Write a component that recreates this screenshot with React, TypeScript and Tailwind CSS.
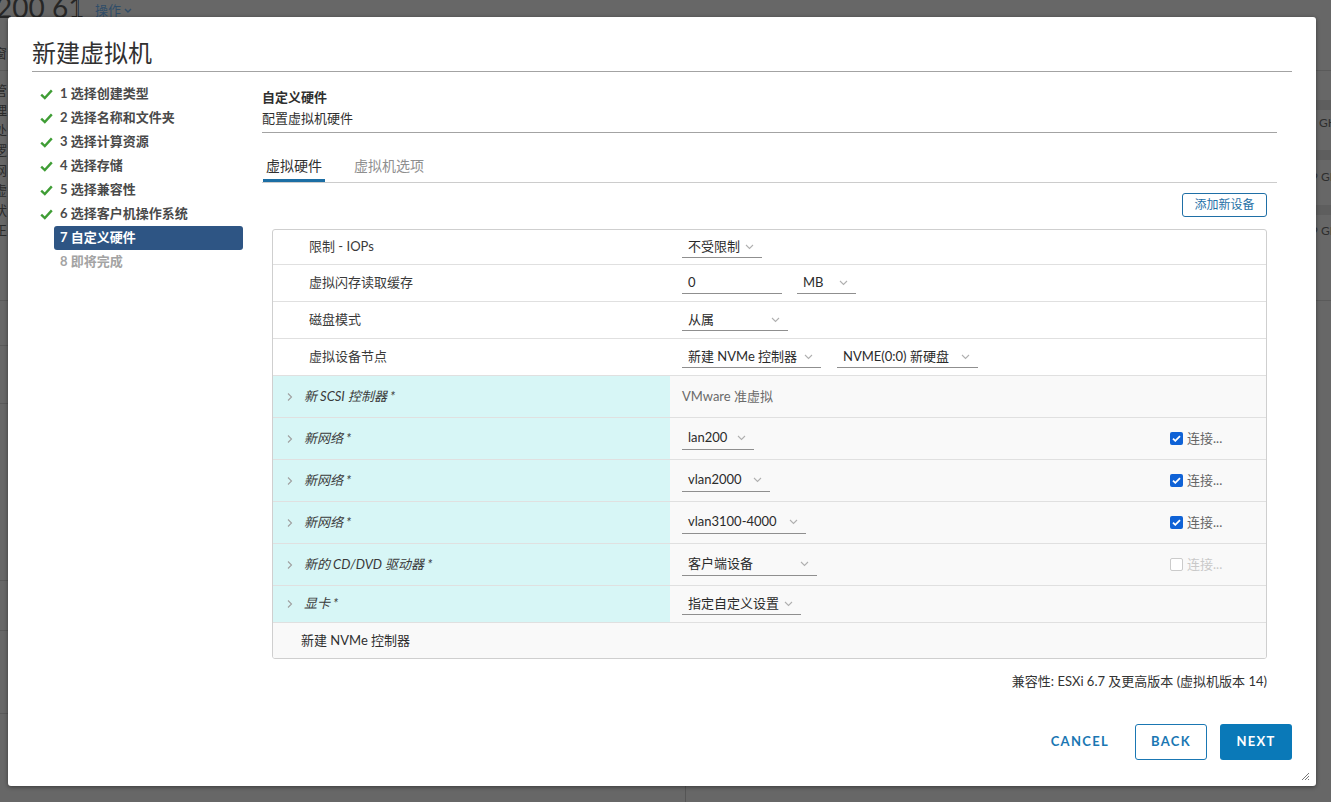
import React from 'react'

const STEPS = [
  { n: 1, label: '选择创建类型', state: 'done' },
  { n: 2, label: '选择名称和文件夹', state: 'done' },
  { n: 3, label: '选择计算资源', state: 'done' },
  { n: 4, label: '选择存储', state: 'done' },
  { n: 5, label: '选择兼容性', state: 'done' },
  { n: 6, label: '选择客户机操作系统', state: 'done' },
  { n: 7, label: '自定义硬件', state: 'active' },
  { n: 8, label: '即将完成', state: 'pending' },
]

const DEVICES = [
  { label: '新 SCSI 控制器 *', kind: 'text', value: 'VMware 准虚拟', h: 'h-[42px]' },
  { label: '新网络 *', kind: 'select', value: 'lan200', w: 'w-[72px]', check: 'on', h: 'h-[42px]' },
  { label: '新网络 *', kind: 'select', value: 'vlan2000', w: 'w-[88px]', check: 'on', h: 'h-[42px]' },
  { label: '新网络 *', kind: 'select', value: 'vlan3100-4000', w: 'w-[124px]', check: 'on', h: 'h-[42px]' },
  { label: '新的 CD/DVD 驱动器 *', kind: 'select', value: '客户端设备', w: 'w-[135px]', check: 'off', h: 'h-[42px]' },
  { label: '显卡 *', kind: 'select', value: '指定自定义设置', w: 'w-[119px]', h: 'h-[37px]' },
]

// faint page text that peeks out left of the dialog
const LEFT_CHARS = ['管', '理', '处', '逻', '网', '虚', '状', '正']

function GreenCheck() {
  return (
    <svg width="13" height="11" viewBox="0 0 13 11">
      <path d="M1.2 5.6l3.6 3.4L11.8 1.4" fill="none" stroke="#3f9d35" strokeWidth="2.4" />
    </svg>
  )
}

function Chevron() {
  return (
    <svg width="9" height="6" viewBox="0 0 9 6" className="shrink-0">
      <path d="M1 1l3.5 3.5L8 1" fill="none" stroke="#b0b0b0" strokeWidth="1.1" />
    </svg>
  )
}

function Caret() {
  return (
    <svg width="6" height="10" viewBox="0 0 6 10" className="shrink-0">
      <path d="M1 1.5l3.5 3.5L1 8.5" fill="none" stroke="#a0a0a0" strokeWidth="1.1" />
    </svg>
  )
}

function Select({ value, className }: { value: string; className: string }) {
  return (
    <div className={`flex h-[22px] items-center justify-between gap-[5px] border-b border-[#8f8f8f] pl-[6px] pr-[8px] text-[13px] text-[#2b2b2b] ${className}`}>
      <span className="whitespace-nowrap">{value}</span>
      <Chevron />
    </div>
  )
}

function Checkbox({ on }: { on: boolean }) {
  if (!on) return <span className="h-[13px] w-[13px] rounded-[2px] border border-[#cbcbcb] bg-white" />
  return (
    <span className="flex h-[13px] w-[13px] items-center justify-center rounded-[2px] bg-[#0f62d6]">
      <svg width="9" height="7" viewBox="0 0 9 7">
        <path d="M1 3.6l2.3 2.2L8 1.2" fill="none" stroke="#fff" strokeWidth="1.8" />
      </svg>
    </span>
  )
}

export default function App() {
  return (
    <div className="relative h-[802px] w-[1331px] overflow-hidden bg-[#676767] font-['Lato','Noto_Sans_CJK_SC',sans-serif]">
      {/* dimmed page behind the dialog */}
      <div className="absolute left-[-4px] top-[-11px] whitespace-nowrap text-[28px] leading-[36px] text-[#262626]">200 61</div>
      <div className="absolute left-[77px] top-0 h-[17px] w-px bg-[#555]" />
      <div className="absolute left-[95px] top-[1px] flex items-center gap-[3px] whitespace-nowrap text-[13px] leading-[18px] text-[#2f4d69]">
        操作
        <svg width="8" height="5" viewBox="0 0 8 5"><path d="M1 1l3 3 3-3" fill="none" stroke="#2f4d69" strokeWidth="1.4" /></svg>
      </div>
      <div className="absolute left-[-6px] top-[44px] text-[13px] leading-[18px] text-[#2a2a2a]">窗</div>
      <div className="absolute left-[-6px] top-[80px] flex flex-col text-[13px] leading-[20px] text-[#2a2a2a]">
        {LEFT_CHARS.map((c, i) => (
          <span key={i}>{c}</span>
        ))}
      </div>
      <div className="absolute left-0 top-[70px] h-px w-[8px] bg-[#5a5a5a]" />
      <div className="absolute left-0 top-[300px] h-px w-[8px] bg-[#5a5a5a]" />
      <div className="absolute left-0 top-[345px] h-px w-[8px] bg-[#5a5a5a]" />
      <div className="absolute left-0 top-[403px] h-px w-[8px] bg-[#5a5a5a]" />
      <div className="absolute left-0 top-[580px] h-px w-[8px] bg-[#5a5a5a]" />
      <div className="absolute left-0 top-[630px] h-px w-[8px] bg-[#5a5a5a]" />
      <div className="absolute left-0 top-[713px] h-px w-[8px] bg-[#5a5a5a]" />
      <div className="absolute left-[1316px] top-[70px] h-px w-[15px] bg-[#5a5a5a]" />
      <div className="absolute left-[1316px] top-[100px] h-[10px] w-[15px] bg-[#5e5e5e]" />
      <div className="absolute left-[1316px] top-[150px] h-[10px] w-[15px] bg-[#5e5e5e]" />
      <div className="absolute left-[1316px] top-[205px] h-[10px] w-[15px] bg-[#5e5e5e]" />
      <div className="absolute left-[1316px] top-[300px] h-px w-[15px] bg-[#5a5a5a]" />
      <div className="absolute left-[1309px] top-[114px] whitespace-nowrap text-[12px] text-[#2e2e2e]">2 GHz</div>
      <div className="absolute left-[1311px] top-[168px] whitespace-nowrap text-[12px] text-[#2e2e2e]">9 GB</div>
      <div className="absolute left-[1311px] top-[222px] whitespace-nowrap text-[12px] text-[#2e2e2e]">9 GB</div>
      <div className="absolute left-[685px] top-[786px] h-[16px] w-px bg-[#555]" />

      {/* dialog */}
      <div className="absolute left-[8px] top-[17px] flex h-[769px] w-[1308px] flex-col rounded-[3px] bg-white px-[24px] shadow-[0_1px_4px_rgba(0,0,0,0.45)]">
        <div className="border-b border-[#a3a3a3] pb-[2px] pt-[20px] text-[24px] leading-[32px] text-[#313131]">新建虚拟机</div>

        <div className="flex flex-1 pt-[10px]">
          {/* steps */}
          <div className="w-[230px] shrink-0 pl-[8px]">
            {STEPS.map((s) => (
              <div key={s.n} className="flex h-[24px] items-center">
                <div className="flex w-[14px] items-center">{s.state === 'done' && <GreenCheck />}</div>
                <div
                  className={
                    s.state === 'active'
                      ? 'flex h-[24px] w-[189px] items-center rounded-[3px] bg-[#2e5584] px-[6px] text-[13px] font-bold text-white'
                      : s.state === 'pending'
                      ? 'px-[6px] text-[13px] font-bold text-[#a3a3a3]'
                      : 'px-[6px] text-[13px] font-bold text-[#4a4a4a]'
                  }
                >
                  {s.n} {s.label}
                </div>
              </div>
            ))}
          </div>

          {/* content */}
          <div className="flex flex-1 flex-col pr-[15px] pt-[5px]">
            <div className="border-b border-[#a3a3a3] pb-[4px] text-[13px] leading-[20px] text-[#2f2f2f]">
              <div className="font-bold">自定义硬件</div>
              <div className="mt-[1px]">配置虚拟机硬件</div>
            </div>

            <div className="mt-[23px] flex border-b border-[#cccccc] pl-[1px] text-[14px] leading-[20px]">
              <div className="border-b-[3px] border-[#1c6ea4] px-[3px] pb-[3px] text-[#2f2f2f]">虚拟硬件</div>
              <div className="ml-[26px] px-[3px] pb-[6px] text-[#8f8f8f]">虚拟机选项</div>
            </div>

            <div className="flex flex-col px-[10px]">
              <div className="mt-[10px] flex justify-end">
                <button className="h-[24px] w-[85px] rounded-[3px] border border-[#1f6fa6] text-[12px] text-[#1f6fa6]">添加新设备</button>
              </div>

              <div className="mt-[12px] overflow-hidden rounded-[3px] border border-[#cfcfcf] text-[13px] text-[#3a3a3a]">
                <div className="flex h-[35px] items-center border-b border-[#e0e0e0]">
                  <div className="w-[397px] pl-[36px]">限制 - IOPs</div>
                  <div className="pl-[12px]"><Select value="不受限制" className="w-[80px]" /></div>
                </div>
                <div className="flex h-[37px] items-center border-b border-[#e0e0e0]">
                  <div className="w-[397px] pl-[36px]">虚拟闪存读取缓存</div>
                  <div className="flex items-center gap-[15px] pl-[12px]">
                    <div className="flex h-[22px] w-[100px] items-center border-b border-[#8f8f8f] pl-[6px] text-[#2b2b2b]">0</div>
                    <Select value="MB" className="w-[59px]" />
                  </div>
                </div>
                <div className="flex h-[37px] items-center border-b border-[#e0e0e0]">
                  <div className="w-[397px] pl-[36px]">磁盘模式</div>
                  <div className="pl-[12px]"><Select value="从属" className="w-[106px]" /></div>
                </div>
                <div className="flex h-[37px] items-center border-b border-[#e0e0e0]">
                  <div className="w-[397px] pl-[36px]">虚拟设备节点</div>
                  <div className="flex items-center gap-[16px] pl-[12px]">
                    <Select value="新建 NVMe 控制器" className="w-[139px]" />
                    <Select value="NVME(0:0) 新硬盘" className="w-[141px]" />
                  </div>
                </div>

                {DEVICES.map((d, i) => (
                  <div key={i} className={`flex border-b border-[#e0e0e0] ${d.h}`}>
                    <div className="flex w-[397px] items-center gap-[11px] bg-[#d7f6f6] pl-[14px] italic text-[#3a3a3a]">
                      <Caret />
                      <span>{d.label}</span>
                    </div>
                    <div className="flex flex-1 items-center bg-[#f9f9f9] pl-[12px]">
                      {d.kind === 'text' ? (
                        <span className="text-[#6a6a6a]">{d.value}</span>
                      ) : (
                        <Select value={d.value} className={d.w ?? ''} />
                      )}
                      {d.check && (
                        <div className="ml-auto flex w-[96px] items-center gap-[4px]">
                          <Checkbox on={d.check === 'on'} />
                          <span className={d.check === 'on' ? 'text-[#666]' : 'text-[#c9c9c9]'}>连接...</span>
                        </div>
                      )}
                    </div>
                  </div>
                ))}

                <div className="flex h-[35px] items-center bg-[#f9f9f9] pl-[28px] text-[#2f2f2f]">新建 NVMe 控制器</div>
              </div>

              <div className="mt-[12px] text-right text-[13px] leading-[20px] text-[#333]">兼容性: ESXi 6.7 及更高版本 (虚拟机版本 14)</div>
            </div>
          </div>
        </div>

        <div className="flex items-center justify-end pb-[26px] text-[13px] font-bold tracking-[0.1em]">
          <button className="h-[36px] px-[12px] text-[#1a77b3]">CANCEL</button>
          <button className="ml-[14px] h-[36px] w-[72px] rounded-[3px] border border-[#1a77b3] text-[#1a77b3]">BACK</button>
          <button className="ml-[13px] h-[36px] w-[72px] rounded-[3px] bg-[#0a79b8] text-white">NEXT</button>
        </div>

        <svg width="10" height="10" viewBox="0 0 10 10" className="absolute bottom-[5px] right-[6px]">
          <path d="M9 2L2 9M9 5L5 9M9 8L8 9" stroke="#777" strokeWidth="1" />
        </svg>
      </div>
    </div>
  )
}
